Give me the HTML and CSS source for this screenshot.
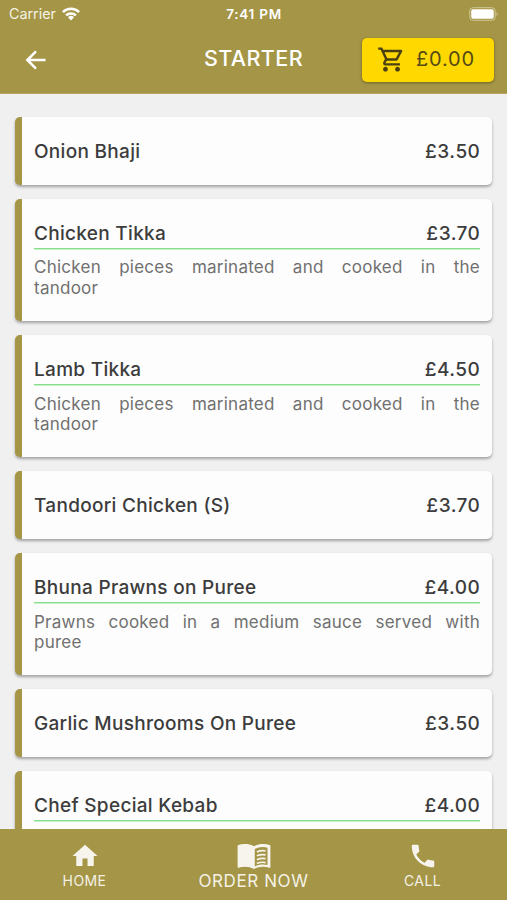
FILE: index.html
```html
<!DOCTYPE html>
<html lang="en">
<head>
<meta charset="utf-8">
<title>Starter</title>
<link rel="stylesheet" href="styles.css">
</head>
<body>
<div class="app">
  <header class="top">
    <div class="status">
      <div class="carrier"><span>Carrier</span>
        <svg class="wifi" viewBox="0 0 18 14"><path d="M9 13.4 12 10.3a4.3 4.3 0 0 0-6 0zM3.2 7.5a8.3 8.3 0 0 1 11.6 0l-1.7 1.8a5.9 5.9 0 0 0-8.2 0zM0 4.3a12.8 12.8 0 0 1 18 0l-1.8 1.8a10.2 10.2 0 0 0-14.4 0z"/></svg>
      </div>
      <span class="time">7:41 PM</span>
      <svg class="battery" viewBox="0 0 30 14"><rect class="shell" x=".7" y=".7" width="25.6" height="12.6" rx="3.5"/><rect x="2.2" y="2.2" width="22.6" height="9.6" rx="2"/><path class="cap" d="M27.6 4.7q2.2 2.2 0 4.6z"/></svg>
    </div>
    <div class="bar">
      <svg class="back" viewBox="0 0 24 24"><path d="M21.5 12H4M12 3.3 3.3 12l8.7 8.7"/></svg>
      <h1>STARTER</h1>
      <div class="cart">
        <svg viewBox="0 0 24 24"><path d="M15.55 13c.75 0 1.41-.41 1.75-1.03l3.58-6.49A1 1 0 0 0 20.01 4H5.21l-.94-2H1v2h2l3.6 7.59-1.35 2.44C4.52 15.37 5.48 17 7 17h12v-2H7l1.1-2h7.45zM6.16 6h12.15l-2.76 5H8.53L6.16 6zM7 18c-1.1 0-1.99.9-1.99 2S5.9 22 7 22s2-.9 2-2-.9-2-2-2zm10 0c-1.1 0-1.99.9-1.99 2s.89 2 1.99 2 2-.9 2-2-.9-2-2-2z"/></svg>
        <span>£0.00</span>
      </div>
    </div>
  </header>
  <main>
    <article><div class="row"><h2>Onion Bhaji</h2><b>£3.50</b></div></article>
    <article class="tall"><div class="row"><h2>Chicken Tikka</h2><b>£3.70</b></div><p><span class="fill">Chicken pieces marinated and cooked in the</span> tandoor</p></article>
    <article class="tall"><div class="row"><h2>Lamb Tikka</h2><b>£4.50</b></div><p><span class="fill">Chicken pieces marinated and cooked in the</span> tandoor</p></article>
    <article><div class="row"><h2>Tandoori Chicken (S)</h2><b>£3.70</b></div></article>
    <article class="tall"><div class="row"><h2>Bhuna Prawns on Puree</h2><b>£4.00</b></div><p><span class="fill">Prawns cooked in a medium sauce served with</span> puree</p></article>
    <article><div class="row"><h2>Garlic Mushrooms On Puree</h2><b>£3.50</b></div></article>
    <article class="tall"><div class="row"><h2>Chef Special Kebab</h2><b>£4.00</b></div></article>
  </main>
  <nav>
    <div class="tab"><svg viewBox="0 0 24 24"><path d="M10 20v-6h4v6h5v-8h3L12 3 2 12h3v8z"/></svg><span>HOME</span></div>
    <div class="tab order"><svg viewBox="0 0 36 28"><path d="M18 3.3C13.5.8 6.500.6 1.800 2Q1 2.200 1 3v22q0 .9 1 .6c5-1.500 11-1.400 16 1.400 5-2.800 11-2.900 16-1.400q1 .3 1-.6V3q0-.8-.8-1C29.500.6 22.500.8 18 3.300z"/><path class="page" d="M18.800 6.300c4-2.200 8.500-2.700 13.200-1.500v18c-4.500-1-9-.6-13.200 1.500z"/><path class="lines" d="M21 9.300q4.500-2 9-1M21 13.300q4.500-2 9-1M21 17.300q4.500-2 9-1M21 21.300q4.500-2 9-1"/></svg><span>ORDER NOW</span></div>
    <div class="tab"><svg viewBox="0 0 24 24"><path d="M6.62 10.79c1.44 2.83 3.76 5.14 6.59 6.59l2.2-2.2c.27-.27.67-.36 1.02-.24 1.12.37 2.33.57 3.57.57.55 0 1 .45 1 1V20c0 .55-.45 1-1 1C10.61 21 3 13.39 3 4c0-.55.45-1 1-1h3.5c.55 0 1 .45 1 1 0 1.25.2 2.45.57 3.57.11.35.03.74-.25 1.02z"/></svg><span>CALL</span></div>
  </nav>
</div>
</body>
</html>
```
FILE: styles.css
```css
* { box-sizing: border-box; margin: 0; }
body { background: #f0f0f0; font-family: Inter, "Liberation Sans", sans-serif; color: #3c3c3c; }
.app { height: 900px; display: flex; flex-direction: column; overflow: hidden; }
.top { flex: none; height: 94px; background: #a49547; color: #fff; border-bottom: 1px solid #b5a35d; }
.status { height: 27px; padding: 0 8px 0 9px; display: grid; grid-template-columns: 1fr auto 1fr; align-items: center; font-size: 14.3px; }
.carrier { display: flex; align-items: center; gap: 6px; color: #f5f2e4; }
.wifi { width: 18px; height: 14px; fill: #fff; }
.time { font-size: 13.5px; font-weight: 600; letter-spacing: .75px; }
.battery { width: 30px; height: 14px; justify-self: end; fill: #fff; }
.shell { fill: none; stroke: #d0c897; stroke-width: 1; }
.cap { fill: #d0c897; }
.bar { height: 65px; padding: 0 13px 0 24px; display: grid; grid-template-columns: 1fr auto 1fr; align-items: center; }
.back { width: 24px; height: 24px; fill: none; stroke: #fff; stroke-width: 2.5; }
h1 { font-size: 21.5px; font-weight: 500; line-height: 28px; letter-spacing: .4px; margin: 0 11px 4px 0; }
.cart { justify-self: end; width: 132px; height: 44px; padding-left: 15px; display: flex; align-items: center; gap: 10px; border-radius: 5px; background: #ffd800; color: #554a16; box-shadow: 0 1px 3px rgba(60, 50, 0, .5); font-size: 20px; letter-spacing: .8px; }
.cart span { padding-bottom: 2px; }
.cart svg { width: 29px; height: 29px; fill: #4b4012; }
main { flex: 1; min-height: 0; overflow: hidden; padding: 23px 15px 0; display: flex; flex-direction: column; gap: 13.8px; }
article { flex: none; height: 68px; padding: 17px 12px 0; border-left: 7px solid #a49547; border-radius: 5px; background: #fdfdfd; box-shadow: 0 2px 3px rgba(0, 0, 0, .32); }
.tall { height: 122.4px; }
.row { height: 34px; padding-top: 1px; display: flex; align-items: center; justify-content: space-between; }
.tall .row { height: 33px; border-bottom: 1px solid #84de8a; box-shadow: 0 1px #c9f0cb; padding-top: 4px; }
h2, b { font-size: 19px; font-weight: 450; line-height: 24px; letter-spacing: .3px; white-space: nowrap; }
b { margin-right: -.4px; letter-spacing: .5px; }
p { font-size: 17px; line-height: 20.5px; letter-spacing: .25px; color: #707070; padding-top: 8.6px; }
.fill { display: block; text-align-last: justify; }
nav { flex: none; height: 71px; background: #a49547; color: #f5f1e5; display: grid; grid-template-columns: repeat(3, 1fr); }
.tab { height: 62px; padding-top: 12px; display: flex; flex-direction: column; align-items: center; font-size: 14px; line-height: 20px; letter-spacing: .4px; }
.tab svg { width: 30px; height: 30px; fill: #f6f4ed; }
.order { font-size: 17px; letter-spacing: .6px; }
.order svg { width: 36px; height: 28px; margin: 2px 0 1px; }
.order .page { fill: #a49547; }
.order .lines { fill: none; stroke: #f6f4ed; stroke-width: 1.8; }
```
